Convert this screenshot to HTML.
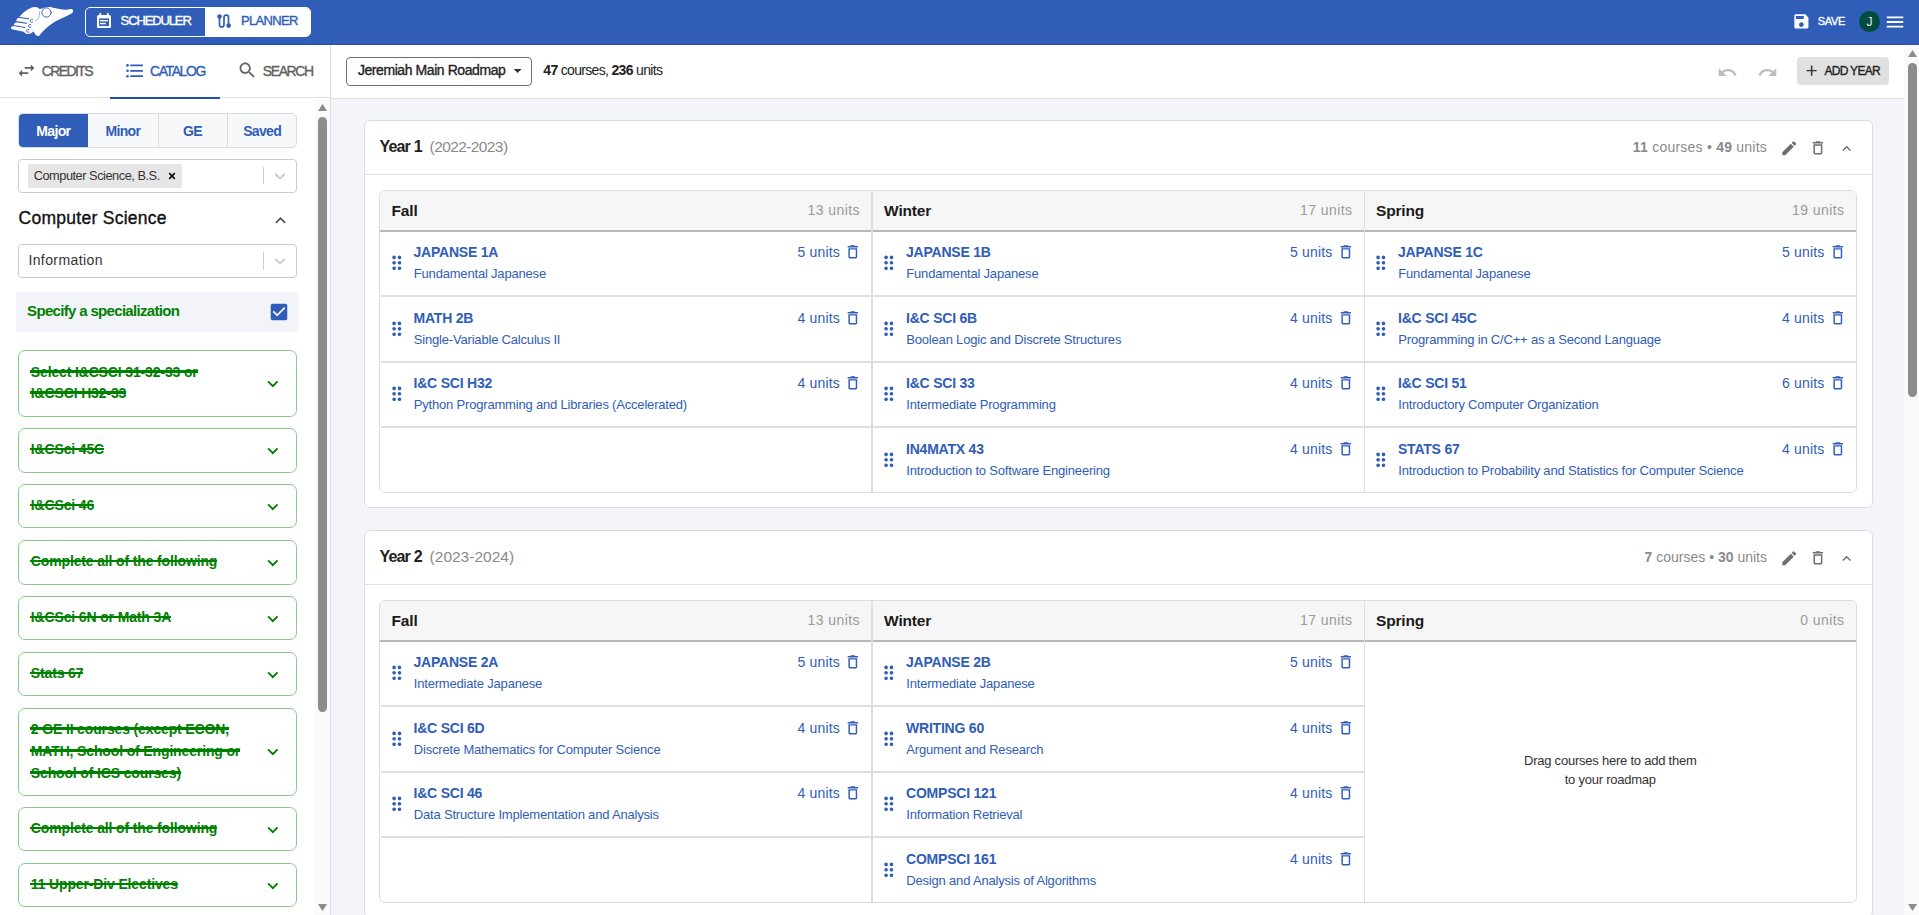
<!DOCTYPE html>
<html><head><meta charset="utf-8"><title>PeterPortal Roadmap</title>
<style>
*{box-sizing:border-box}
html,body{margin:0;padding:0}
body{width:1919px;height:915px;overflow:hidden;position:relative;font-family:"Liberation Sans", sans-serif;background:#fff}
.a{position:absolute}
.t{position:absolute;line-height:0;white-space:nowrap}
.st::after{content:"";position:absolute;left:-0.5px;right:0;top:-1.2px;height:2.2px;background:#008000}
</style></head><body>

<div class="a" style="left:0px;top:0px;width:1919px;height:45px;background:#305db7;border-bottom:1px solid #2550ad"></div>
<svg class="a" style="left:8px;top:4px;width:70px;height:36px" viewBox="0 0 1779 915">
<path fill="#fff" d="M320 295 C420 180 560 85 680 78 C740 76 775 100 800 130 L870 112 C950 80 1040 70 1120 88 C1300 128 1450 165 1580 130 C1645 115 1680 175 1640 220 C1590 270 1400 335 1200 445 C1010 560 890 680 795 810 C740 835 680 770 650 690 C615 735 545 770 480 760 C440 752 420 725 400 705 L100 640 C60 625 70 575 110 565 L150 555 C140 520 160 480 200 470 L210 455 C205 410 230 360 270 345 Z"/>
<g fill="none" stroke="#305db7" stroke-width="26" stroke-linecap="round">
<path d="M140 548 L432 598"/><path d="M200 448 L475 492"/><path d="M260 335 L525 372"/>
<circle cx="978" cy="215" r="118" stroke-width="24"/>
<path d="M625 395 A38 38 0 1 0 625 460" stroke-width="22"/><path d="M580 525 A38 38 0 1 0 580 590" stroke-width="22"/><path d="M530 650 A38 38 0 1 0 530 715" stroke-width="22"/>
<path d="M800 200 C805 300 780 390 700 425" stroke-width="14" stroke-dasharray="30 26"/>
</g></svg>
<div class="a" style="left:85px;top:7px;width:226px;height:29.5px;border:1.5px solid #fff;border-radius:5px;overflow:hidden"><div class="a" style="left:118.5px;top:0;width:110px;height:30px;background:#fff"></div></div>
<svg class="a" style="left:97px;top:12.7px;width:14px;height:15.2px" viewBox="0 0 14 15.2">
<rect x="0" y="2.1" width="14" height="13.1" rx="1.8" fill="#fff"/>
<rect x="2.4" y="0" width="1.8" height="3" rx=".6" fill="#fff"/><rect x="9.9" y="0" width="1.8" height="3" rx=".6" fill="#fff"/>
<rect x="2.1" y="5.4" width="9.9" height="7.7" fill="#305db7"/>
<rect x="3" y="7" width="7.9" height="1.4" fill="#fff"/><rect x="3" y="9.9" width="5.7" height="1.4" fill="#fff"/>
</svg>
<div id="t_sched" class="t" style="left:120.60px;top:21.45px;font-size:13px;color:#fff;font-weight:400;letter-spacing:-1.125px;-webkit-text-stroke:0.35px currentColor">SCHEDULER</div>
<svg class="a" style="left:217px;top:13.9px;width:14px;height:14px" viewBox="0 0 14 14">
<path d="M2.5 2.5 V10.7 A2.25 2.25 0 0 0 7 10.7 V3.3 A2.25 2.25 0 0 1 11.5 3.3 V11.5" fill="none" stroke="#305db7" stroke-width="1.7"/>
<circle cx="2.5" cy="2.5" r="2.3" fill="#305db7"/><circle cx="11.6" cy="11.6" r="2.3" fill="#305db7"/>
</svg>
<div id="t_plan" class="t" style="left:241.00px;top:21.45px;font-size:13px;color:#305db7;font-weight:400;letter-spacing:-0.667px;-webkit-text-stroke:0.35px currentColor">PLANNER</div>
<svg class="a" style="left:1792.10px;top:12.10px;width:18.80px;height:18.80px" viewBox="0 0 24 24"><path fill="#fff" d="M17 3H5c-1.11 0-2 .9-2 2v14c0 1.1.89 2 2 2h14c1.1 0 2-.9 2-2V7l-4-4zm-5 16c-1.66 0-3-1.34-3-3s1.34-3 3-3 3 1.34 3 3-1.34 3-3 3zm3-10H5V5h10v4z"/></svg>
<div id="t_save" class="t" style="left:1817.70px;top:21.15px;font-size:11px;color:#fff;font-weight:400;letter-spacing:-0.332px;-webkit-text-stroke:0.35px currentColor">SAVE</div>
<div class="a" style="left:1859px;top:11px;width:21px;height:21px;border-radius:50%;background:#004d40"></div>
<div id="t_j" class="t" style="left:1569.50px;width:600px;text-align:center;top:22.30px;font-size:12px;color:#e6e6e6;font-weight:400;letter-spacing:0px;">J</div>
<svg class="a" style="left:1883.75px;top:10.50px;width:22.00px;height:22.00px" viewBox="0 0 24 24"><path fill="#fff" d="M3 18h18v-2H3v2zm0-5h18v-2H3v2zm0-7v2h18V6H3z"/></svg>
<div class="a" style="left:330px;top:45px;width:1px;height:870px;background:#e0e0e0"></div>
<div class="a" style="left:0px;top:97px;width:330px;height:1px;background:#e0e0e0"></div>
<div class="a" style="left:110px;top:97px;width:110px;height:2px;background:#1d4fae"></div>
<svg class="a" style="left:16.30px;top:59.80px;width:21.00px;height:21.00px" viewBox="0 0 24 24"><path fill="#616161" d="M6.99 11L3 15l3.99 4v-3H14v-2H6.99v-3zM21 9l-3.99-4v3H10v2h7.01v3L21 9z"/></svg>
<div id="t_cred" class="t" style="left:41.70px;top:70.60px;font-size:14px;color:#616161;font-weight:400;letter-spacing:-1.585px;-webkit-text-stroke:0.35px currentColor">CREDITS</div>
<svg class="a" style="left:125.9px;top:64px;width:17.2px;height:13.6px" viewBox="0 0 17.2 13.6">
<g fill="#305db7"><circle cx="1.5" cy="1.4" r="1.3"/><circle cx="1.5" cy="6.8" r="1.3"/><circle cx="1.5" cy="12.2" r="1.3"/>
<rect x="4.2" y=".55" width="12.9" height="1.7" rx=".4"/><rect x="4.2" y="5.95" width="12.9" height="1.7" rx=".4"/><rect x="4.2" y="11.35" width="12.9" height="1.7" rx=".4"/></g></svg>
<div id="t_cat" class="t" style="left:150.00px;top:70.60px;font-size:14px;color:#305db7;font-weight:400;letter-spacing:-1.417px;-webkit-text-stroke:0.35px currentColor">CATALOG</div>
<svg class="a" style="left:237.40px;top:60.40px;width:20.60px;height:20.60px" viewBox="0 0 24 24"><path fill="#616161" d="M15.5 14h-.79l-.28-.27C15.41 12.59 16 11.11 16 9.5 16 5.91 13.09 3 9.5 3S3 5.91 3 9.5 5.91 16 9.5 16c1.61 0 3.09-.59 4.23-1.57l.27.28v.79l5 4.99L20.49 19l-4.99-5zm-6 0C7.01 14 5 11.99 5 9.5S7.01 5 9.5 5 14 7.01 14 9.5 11.99 14 9.5 14z"/></svg>
<div id="t_search" class="t" style="left:262.80px;top:70.60px;font-size:14px;color:#616161;font-weight:400;letter-spacing:-1.4px;-webkit-text-stroke:0.35px currentColor">SEARCH</div>
<div class="a" style="left:18px;top:113px;width:279px;height:34.5px;border:1px solid #d9dbe0;border-radius:5px;overflow:hidden;background:#f7f8fa"><div class="a" style="left:0;top:0;width:69px;height:33px;background:#305db7"></div><div class="a" style="left:138.5px;top:0;width:1px;height:33px;background:#d9dbe0"></div><div class="a" style="left:208px;top:0;width:1px;height:33px;background:#d9dbe0"></div></div>
<div id="t_seg0" class="t" style="left:-246.70px;width:600px;text-align:center;top:130.50px;font-size:14px;color:#fff;font-weight:700;letter-spacing:-0.625px;">Major</div>
<div id="t_seg1" class="t" style="left:-177.10px;width:600px;text-align:center;top:130.50px;font-size:14px;color:#305db7;font-weight:700;letter-spacing:-0.7px;">Minor</div>
<div id="t_seg2" class="t" style="left:-107.50px;width:600px;text-align:center;top:130.50px;font-size:14px;color:#305db7;font-weight:700;letter-spacing:-0.7px;">GE</div>
<div id="t_seg3" class="t" style="left:-37.90px;width:600px;text-align:center;top:130.50px;font-size:14px;color:#305db7;font-weight:700;letter-spacing:-0.7px;">Saved</div>
<div class="a" style="left:18px;top:159px;width:279px;height:33.5px;border:1px solid #cccccc;border-radius:4px;background:#fff"></div>
<div class="a" style="left:28px;top:164px;width:154px;height:23.7px;background:#e6e6e6;border-radius:2px"></div>
<div id="t_chip" class="t" style="left:33.70px;top:175.64px;font-size:12.75px;color:#333;font-weight:400;letter-spacing:-0.454px;">Computer Science, B.S.</div>
<svg class="a" style="left:168px;top:172.2px;width:8px;height:8px" viewBox="0 0 8 8"><path d="M1.2 1.2L6.8 6.8M6.8 1.2L1.2 6.8" stroke="#111" stroke-width="1.7"/></svg>
<div class="a" style="left:263.3px;top:167.3px;width:1px;height:17.2px;background:#cccccc"></div>
<svg class="a" style="left:270.8px;top:166.8px;width:18px;height:18px" viewBox="0 0 20 20"><path fill="#cccccc" d="M4.516 7.548c0.436-0.446 1.043-0.481 1.576 0l3.908 3.747 3.908-3.747c0.533-0.481 1.141-0.446 1.574 0 0.436 0.445 0.408 1.197 0 1.615-0.406 0.418-4.695 4.502-4.695 4.502-0.217 0.223-0.502 0.335-0.787 0.335s-0.57-0.112-0.789-0.335c0 0-4.287-4.084-4.695-4.502s-0.436-1.17 0-1.615z"/></svg>
<div id="t_cs" class="t" style="left:18.60px;top:218.07px;font-size:17.5px;color:#111;font-weight:400;letter-spacing:0.267px;-webkit-text-stroke:0.35px currentColor">Computer Science</div>
<svg class="a" style="left:269.70px;top:210.00px;width:21.00px;height:21.00px" viewBox="0 0 24 24"><path fill="#555" d="M12 8l-6 6 1.41 1.41L12 10.83l4.59 4.58L18 14z"/></svg>
<div class="a" style="left:18px;top:244.3px;width:279px;height:33.3px;border:1px solid #cccccc;border-radius:4px;background:#fff"></div>
<div id="t_info" class="t" style="left:28.40px;top:260.40px;font-size:14px;color:#333;font-weight:400;letter-spacing:0.4px;">Information</div>
<div class="a" style="left:263.3px;top:252px;width:1px;height:17.8px;background:#cccccc"></div>
<svg class="a" style="left:270.8px;top:251.5px;width:18px;height:18px" viewBox="0 0 20 20"><path fill="#cccccc" d="M4.516 7.548c0.436-0.446 1.043-0.481 1.576 0l3.908 3.747 3.908-3.747c0.533-0.481 1.141-0.446 1.574 0 0.436 0.445 0.408 1.197 0 1.615-0.406 0.418-4.695 4.502-4.695 4.502-0.217 0.223-0.502 0.335-0.787 0.335s-0.57-0.112-0.789-0.335c0 0-4.287-4.084-4.695-4.502s-0.436-1.17 0-1.615z"/></svg>
<div class="a" style="left:16.3px;top:292px;width:282.7px;height:40px;background:#f3f4f9;border-radius:4px"></div>
<div id="t_spec" class="t" style="left:27.10px;top:311.15px;font-size:15px;color:#008000;font-weight:700;letter-spacing:-0.674px;">Specify a specialization</div>
<svg class="a" style="left:267.75px;top:300.85px;width:22.00px;height:22.00px" viewBox="0 0 24 24"><path fill="#305db7" d="M19 3H5c-1.11 0-2 .9-2 2v14c0 1.1.89 2 2 2h14c1.11 0 2-.9 2-2V5c0-1.1-.89-2-2-2zm-9 14l-5-5 1.41-1.41L10 14.17l7.59-7.59L19 8l-9 9z"/></svg>
<div class="a" style="left:18px;top:350px;width:279px;height:66.7px;border:1px solid #88cc88;border-radius:7px;background:#fff"></div>
<div id="t_req0_0" class="t st" style="left:30.80px;top:371.55px;font-size:14px;color:#008000;font-weight:700;letter-spacing:-0.142px;">Select I&amp;CSCI 31-32-33 or</div>
<div id="t_req0_1" class="t st" style="left:30.80px;top:392.55px;font-size:14px;color:#008000;font-weight:700;letter-spacing:-0.142px;">I&amp;CSCI H32-33</div>
<svg class="a" style="left:262.10px;top:372.70px;width:21.60px;height:21.60px" viewBox="0 0 24 24"><path fill="#008000" d="M16.59 8.59L12 13.17 7.41 8.59 6 10l6 6 6-6z"/></svg>
<div class="a" style="left:18px;top:428px;width:279px;height:44.5px;border:1px solid #88cc88;border-radius:7px;background:#fff"></div>
<div id="t_req1_0" class="t st" style="left:30.80px;top:448.95px;font-size:14px;color:#008000;font-weight:700;letter-spacing:-0.142px;">I&amp;CSci 45C</div>
<svg class="a" style="left:262.10px;top:439.60px;width:21.60px;height:21.60px" viewBox="0 0 24 24"><path fill="#008000" d="M16.59 8.59L12 13.17 7.41 8.59 6 10l6 6 6-6z"/></svg>
<div class="a" style="left:18px;top:484.3px;width:279px;height:44.2px;border:1px solid #88cc88;border-radius:7px;background:#fff"></div>
<div id="t_req2_0" class="t st" style="left:30.80px;top:505.10px;font-size:14px;color:#008000;font-weight:700;letter-spacing:-0.142px;">I&amp;CSci 46</div>
<svg class="a" style="left:262.10px;top:495.75px;width:21.60px;height:21.60px" viewBox="0 0 24 24"><path fill="#008000" d="M16.59 8.59L12 13.17 7.41 8.59 6 10l6 6 6-6z"/></svg>
<div class="a" style="left:18px;top:540.4px;width:279px;height:44.2px;border:1px solid #88cc88;border-radius:7px;background:#fff"></div>
<div id="t_req3_0" class="t st" style="left:30.80px;top:561.20px;font-size:14px;color:#008000;font-weight:700;letter-spacing:-0.142px;">Complete all of the following</div>
<svg class="a" style="left:262.10px;top:551.85px;width:21.60px;height:21.60px" viewBox="0 0 24 24"><path fill="#008000" d="M16.59 8.59L12 13.17 7.41 8.59 6 10l6 6 6-6z"/></svg>
<div class="a" style="left:18px;top:596.1px;width:279px;height:44.2px;border:1px solid #88cc88;border-radius:7px;background:#fff"></div>
<div id="t_req4_0" class="t st" style="left:30.80px;top:616.90px;font-size:14px;color:#008000;font-weight:700;letter-spacing:-0.142px;">I&amp;CSci 6N or Math 3A</div>
<svg class="a" style="left:262.10px;top:607.55px;width:21.60px;height:21.60px" viewBox="0 0 24 24"><path fill="#008000" d="M16.59 8.59L12 13.17 7.41 8.59 6 10l6 6 6-6z"/></svg>
<div class="a" style="left:18px;top:652.2px;width:279px;height:43.9px;border:1px solid #88cc88;border-radius:7px;background:#fff"></div>
<div id="t_req5_0" class="t st" style="left:30.80px;top:672.85px;font-size:14px;color:#008000;font-weight:700;letter-spacing:-0.142px;">Stats 67</div>
<svg class="a" style="left:262.10px;top:663.50px;width:21.60px;height:21.60px" viewBox="0 0 24 24"><path fill="#008000" d="M16.59 8.59L12 13.17 7.41 8.59 6 10l6 6 6-6z"/></svg>
<div class="a" style="left:18px;top:708px;width:279px;height:87.7px;border:1px solid #88cc88;border-radius:7px;background:#fff"></div>
<div id="t_req6_0" class="t st" style="left:30.80px;top:728.55px;font-size:14px;color:#008000;font-weight:700;letter-spacing:-0.142px;">2 GE II courses (except ECON,</div>
<div id="t_req6_1" class="t st" style="left:30.80px;top:750.55px;font-size:14px;color:#008000;font-weight:700;letter-spacing:-0.142px;">MATH, School of Engineering or</div>
<div id="t_req6_2" class="t st" style="left:30.80px;top:772.55px;font-size:14px;color:#008000;font-weight:700;letter-spacing:-0.142px;">School of ICS courses)</div>
<svg class="a" style="left:262.10px;top:741.20px;width:21.60px;height:21.60px" viewBox="0 0 24 24"><path fill="#008000" d="M16.59 8.59L12 13.17 7.41 8.59 6 10l6 6 6-6z"/></svg>
<div class="a" style="left:18px;top:807.3px;width:279px;height:44.2px;border:1px solid #88cc88;border-radius:7px;background:#fff"></div>
<div id="t_req7_0" class="t st" style="left:30.80px;top:828.10px;font-size:14px;color:#008000;font-weight:700;letter-spacing:-0.142px;">Complete all of the following</div>
<svg class="a" style="left:262.10px;top:818.75px;width:21.60px;height:21.60px" viewBox="0 0 24 24"><path fill="#008000" d="M16.59 8.59L12 13.17 7.41 8.59 6 10l6 6 6-6z"/></svg>
<div class="a" style="left:18px;top:863.3px;width:279px;height:44.2px;border:1px solid #88cc88;border-radius:7px;background:#fff"></div>
<div id="t_req8_0" class="t st" style="left:30.80px;top:884.10px;font-size:14px;color:#008000;font-weight:700;letter-spacing:-0.142px;">11 Upper-Div Electives</div>
<svg class="a" style="left:262.10px;top:874.75px;width:21.60px;height:21.60px" viewBox="0 0 24 24"><path fill="#008000" d="M16.59 8.59L12 13.17 7.41 8.59 6 10l6 6 6-6z"/></svg>
<div class="a" style="left:315px;top:99px;width:15px;height:816px;background:#fafafa"></div>
<div class="a" style="left:318px;top:117.2px;width:9px;height:594.4px;border-radius:4.5px;background:#8c8c8c"></div>
<svg class="a" style="left:317px;top:103px;width:11px;height:9px" viewBox="0 0 11 9"><path d="M5.5 1L10 8H1z" fill="#8c8c8c"/></svg>
<svg class="a" style="left:317px;top:903px;width:11px;height:9px" viewBox="0 0 11 9"><path d="M1 1H10L5.5 8z" fill="#8c8c8c"/></svg>
<div class="a" style="left:331px;top:45px;width:1573px;height:53px;background:#fff"></div>
<div class="a" style="left:331px;top:98px;width:1573px;height:1px;background:#e0e0e0"></div>
<div class="a" style="left:331px;top:99px;width:1573px;height:816px;background:#f4f5fa"></div>
<div class="a" style="left:346.3px;top:57.4px;width:185.3px;height:28.6px;border:1px solid #6e6e6e;border-radius:4px"></div>
<div id="t_rm" class="t" style="left:357.90px;top:70.30px;font-size:14px;color:#222;font-weight:400;letter-spacing:-0.425px;-webkit-text-stroke:0.35px currentColor">Jeremiah Main Roadmap</div>
<svg class="a" style="left:508.40px;top:61.00px;width:19.20px;height:19.20px" viewBox="0 0 24 24"><path fill="#333" d="M7 10l5 5 5-5z"/></svg>
<div id="t_cnt" class="t" style="left:543.30px;top:70.30px;font-size:14px;color:#222;font-weight:400;letter-spacing:-0.675px;"><b>47</b> courses, <b>236</b> units</div>
<svg class="a" style="left:1716.75px;top:61.60px;width:21.00px;height:21.00px" viewBox="0 0 24 24"><path fill="#bdbdbd" d="M12.5 8c-2.65 0-5.05.99-6.9 2.6L2 7v9h9l-3.62-3.62c1.39-1.16 3.16-1.88 5.12-1.88 3.54 0 6.55 2.31 7.6 5.5l2.37-.78C21.08 11.03 17.15 8 12.5 8z"/></svg>
<svg class="a" style="left:1757.25px;top:61.60px;width:21.00px;height:21.00px" viewBox="0 0 24 24"><path fill="#bdbdbd" d="M18.4 10.6C16.55 8.99 14.15 8 11.5 8c-4.65 0-8.58 3.03-9.96 7.22L3.9 16c1.05-3.19 4.05-5.5 7.6-5.5 1.95 0 3.73.72 5.12 1.88L13 16h9V7l-3.6 3.6z"/></svg>
<div class="a" style="left:1797px;top:57px;width:92px;height:27.7px;background:#e0e0e0;border-radius:4px"></div>
<svg class="a" style="left:1803.20px;top:62.40px;width:17.30px;height:17.30px" viewBox="0 0 24 24"><path fill="#333" d="M19 13h-6v6h-2v-6H5v-2h6V5h2v6h6v2z"/></svg>
<div id="t_addyear" class="t" style="left:1824.50px;top:70.80px;font-size:12px;color:#222;font-weight:400;letter-spacing:-0.714px;-webkit-text-stroke:0.35px currentColor">ADD YEAR</div>
<div class="a" style="left:1904px;top:45px;width:15px;height:870px;background:#fafafa"></div>
<div class="a" style="left:1908px;top:62.7px;width:9px;height:334px;border-radius:4.5px;background:#8c8c8c"></div>
<svg class="a" style="left:1907px;top:49px;width:11px;height:9px" viewBox="0 0 11 9"><path d="M5.5 1L10 8H1z" fill="#8c8c8c"/></svg>
<svg class="a" style="left:1907px;top:903px;width:11px;height:9px" viewBox="0 0 11 9"><path d="M1 1H10L5.5 8z" fill="#8c8c8c"/></svg>
<div class="a" style="left:364px;top:120px;height:388px;border:1px solid #dddddd;border-radius:6px;background:#fff;width:1509px"></div>
<div class="a" style="left:365px;top:174px;width:1507px;height:1px;background:#e0e0e0"></div>
<div id="t_y0" class="t" style="left:379.40px;top:147.20px;font-size:16px;color:#212121;font-weight:700;letter-spacing:-0.8px;">Year 1</div>
<div id="t_yr0" class="t" style="left:429.60px;top:147.17px;font-size:15.5px;color:#8a8a8a;font-weight:400;letter-spacing:-0.6px;">(2022-2023)</div>
<div id="t_yc0" class="t" style="right:152.00px;top:147.20px;font-size:14px;color:#8a8a8a;font-weight:400;letter-spacing:0.225px;"><b>11</b> courses • <b>49</b> units</div>
<svg class="a" style="left:1779.60px;top:139.00px;width:18.50px;height:18.50px" viewBox="0 0 24 24"><path fill="#6e6e6e" d="M3 17.25V21h3.75L17.81 9.94l-3.75-3.75L3 17.25zM20.71 7.04c.39-.39.39-1.02 0-1.41l-2.34-2.34a.9959.9959 0 0 0-1.41 0l-1.83 1.83 3.75 3.75 1.83-1.83z"/></svg>
<svg class="a" style="left:1809.00px;top:139.10px;width:17.80px;height:17.80px" viewBox="0 0 24 24"><path fill="#6e6e6e" d="M6 19c0 1.1.9 2 2 2h8c1.1 0 2-.9 2-2V7H6v12zM8 9h8v10H8V9zm7.5-5l-1-1h-5l-1 1H5v2h14V4h-3.5z"/></svg>
<svg class="a" style="left:1837.70px;top:140.20px;width:17.30px;height:17.30px" viewBox="0 0 24 24"><path fill="#6e6e6e" d="M12 8l-6 6 1.41 1.41L12 10.83l4.59 4.58L18 14z"/></svg>
<div class="a" style="left:379px;top:190px;width:1478px;height:303px;border:1px solid #dcdcdc;border-radius:6px;overflow:hidden;background:#fff"><div class="a" style="left:0;top:0;width:1476px;height:41px;background:#f6f6f6;border-bottom:2px solid #b8b8b8"></div><div class="a" style="left:491px;top:0;width:2px;height:301px;background:#dedede"></div><div class="a" style="left:983.5px;top:0;width:1.6px;height:301px;background:#dedede"></div></div>
<div id="t_q00" class="t" style="left:391.60px;top:211.17px;font-size:15.5px;color:#1a1a1a;font-weight:700;letter-spacing:-0.201px;">Fall</div>
<div id="t_qu00" class="t" style="right:1059.00px;top:210.30px;font-size:14px;color:#9a9a9a;font-weight:400;letter-spacing:0.43px;">13 units</div>
<div class="a" style="left:380.5px;top:295.0px;width:490.5px;height:2px;background:#dedede"></div>
<svg class="a" style="left:385.50px;top:252.00px;width:21.60px;height:21.60px" viewBox="0 0 24 24"><path fill="#305db7" d="M11 18c0 1.1-.9 2-2 2s-2-.9-2-2 .9-2 2-2 2 .9 2 2zm-2-8c-1.1 0-2 .9-2 2s.9 2 2 2 2-.9 2-2-.9-2-2-2zm0-6c-1.1 0-2 .9-2 2s.9 2 2 2 2-.9 2-2-.9-2-2-2zm6 4c1.1 0 2-.9 2-2s-.9-2-2-2-2 .9-2 2 .9 2 2 2zm0 2c-1.1 0-2 .9-2 2s.9 2 2 2 2-.9 2-2-.9-2-2-2zm0 6c-1.1 0-2 .9-2 2s.9 2 2 2 2-.9 2-2-.9-2-2-2z"/></svg>
<div id="t_cn000" class="t" style="left:413.50px;top:252.20px;font-size:14px;color:#305db7;font-weight:700;letter-spacing:-0.217px;">JAPANSE 1A</div>
<div id="t_ct000" class="t" style="left:413.80px;top:274.25px;font-size:13px;color:#305db7;font-weight:400;letter-spacing:-0.187px;">Fundamental Japanese</div>
<div id="t_cu000" class="t" style="right:1079.00px;top:252.00px;font-size:14px;color:#305db7;font-weight:400;letter-spacing:0.167px;">5 units</div>
<svg class="a" style="left:844.20px;top:243.10px;width:17.60px;height:17.60px" viewBox="0 0 24 24"><path fill="#305db7" d="M6 19c0 1.1.9 2 2 2h8c1.1 0 2-.9 2-2V7H6v12zM8 9h8v10H8V9zm7.5-5l-1-1h-5l-1 1H5v2h14V4h-3.5z"/></svg>
<div class="a" style="left:380.5px;top:360.5px;width:490.5px;height:2px;background:#dedede"></div>
<svg class="a" style="left:385.50px;top:317.50px;width:21.60px;height:21.60px" viewBox="0 0 24 24"><path fill="#305db7" d="M11 18c0 1.1-.9 2-2 2s-2-.9-2-2 .9-2 2-2 2 .9 2 2zm-2-8c-1.1 0-2 .9-2 2s.9 2 2 2 2-.9 2-2-.9-2-2-2zm0-6c-1.1 0-2 .9-2 2s.9 2 2 2 2-.9 2-2-.9-2-2-2zm6 4c1.1 0 2-.9 2-2s-.9-2-2-2-2 .9-2 2 .9 2 2 2zm0 2c-1.1 0-2 .9-2 2s.9 2 2 2 2-.9 2-2-.9-2-2-2zm0 6c-1.1 0-2 .9-2 2s.9 2 2 2 2-.9 2-2-.9-2-2-2z"/></svg>
<div id="t_cn001" class="t" style="left:413.50px;top:317.70px;font-size:14px;color:#305db7;font-weight:700;letter-spacing:-0.217px;">MATH 2B</div>
<div id="t_ct001" class="t" style="left:413.80px;top:339.75px;font-size:13px;color:#305db7;font-weight:400;letter-spacing:-0.187px;">Single-Variable Calculus II</div>
<div id="t_cu001" class="t" style="right:1079.00px;top:317.50px;font-size:14px;color:#305db7;font-weight:400;letter-spacing:0.167px;">4 units</div>
<svg class="a" style="left:844.20px;top:308.60px;width:17.60px;height:17.60px" viewBox="0 0 24 24"><path fill="#305db7" d="M6 19c0 1.1.9 2 2 2h8c1.1 0 2-.9 2-2V7H6v12zM8 9h8v10H8V9zm7.5-5l-1-1h-5l-1 1H5v2h14V4h-3.5z"/></svg>
<div class="a" style="left:380.5px;top:426.0px;width:490.5px;height:2px;background:#dedede"></div>
<svg class="a" style="left:385.50px;top:383.00px;width:21.60px;height:21.60px" viewBox="0 0 24 24"><path fill="#305db7" d="M11 18c0 1.1-.9 2-2 2s-2-.9-2-2 .9-2 2-2 2 .9 2 2zm-2-8c-1.1 0-2 .9-2 2s.9 2 2 2 2-.9 2-2-.9-2-2-2zm0-6c-1.1 0-2 .9-2 2s.9 2 2 2 2-.9 2-2-.9-2-2-2zm6 4c1.1 0 2-.9 2-2s-.9-2-2-2-2 .9-2 2 .9 2 2 2zm0 2c-1.1 0-2 .9-2 2s.9 2 2 2 2-.9 2-2-.9-2-2-2zm0 6c-1.1 0-2 .9-2 2s.9 2 2 2 2-.9 2-2-.9-2-2-2z"/></svg>
<div id="t_cn002" class="t" style="left:413.50px;top:383.20px;font-size:14px;color:#305db7;font-weight:700;letter-spacing:-0.217px;">I&amp;C SCI H32</div>
<div id="t_ct002" class="t" style="left:413.80px;top:405.25px;font-size:13px;color:#305db7;font-weight:400;letter-spacing:-0.187px;">Python Programming and Libraries (Accelerated)</div>
<div id="t_cu002" class="t" style="right:1079.00px;top:383.00px;font-size:14px;color:#305db7;font-weight:400;letter-spacing:0.167px;">4 units</div>
<svg class="a" style="left:844.20px;top:374.10px;width:17.60px;height:17.60px" viewBox="0 0 24 24"><path fill="#305db7" d="M6 19c0 1.1.9 2 2 2h8c1.1 0 2-.9 2-2V7H6v12zM8 9h8v10H8V9zm7.5-5l-1-1h-5l-1 1H5v2h14V4h-3.5z"/></svg>
<div id="t_q01" class="t" style="left:884.10px;top:211.17px;font-size:15.5px;color:#1a1a1a;font-weight:700;letter-spacing:-0.201px;">Winter</div>
<div id="t_qu01" class="t" style="right:566.50px;top:210.30px;font-size:14px;color:#9a9a9a;font-weight:400;letter-spacing:0.43px;">17 units</div>
<div class="a" style="left:873px;top:295.0px;width:490.5px;height:2px;background:#dedede"></div>
<svg class="a" style="left:878.00px;top:252.00px;width:21.60px;height:21.60px" viewBox="0 0 24 24"><path fill="#305db7" d="M11 18c0 1.1-.9 2-2 2s-2-.9-2-2 .9-2 2-2 2 .9 2 2zm-2-8c-1.1 0-2 .9-2 2s.9 2 2 2 2-.9 2-2-.9-2-2-2zm0-6c-1.1 0-2 .9-2 2s.9 2 2 2 2-.9 2-2-.9-2-2-2zm6 4c1.1 0 2-.9 2-2s-.9-2-2-2-2 .9-2 2 .9 2 2 2zm0 2c-1.1 0-2 .9-2 2s.9 2 2 2 2-.9 2-2-.9-2-2-2zm0 6c-1.1 0-2 .9-2 2s.9 2 2 2 2-.9 2-2-.9-2-2-2z"/></svg>
<div id="t_cn010" class="t" style="left:906.00px;top:252.20px;font-size:14px;color:#305db7;font-weight:700;letter-spacing:-0.217px;">JAPANSE 1B</div>
<div id="t_ct010" class="t" style="left:906.30px;top:274.25px;font-size:13px;color:#305db7;font-weight:400;letter-spacing:-0.187px;">Fundamental Japanese</div>
<div id="t_cu010" class="t" style="right:586.50px;top:252.00px;font-size:14px;color:#305db7;font-weight:400;letter-spacing:0.167px;">5 units</div>
<svg class="a" style="left:1336.70px;top:243.10px;width:17.60px;height:17.60px" viewBox="0 0 24 24"><path fill="#305db7" d="M6 19c0 1.1.9 2 2 2h8c1.1 0 2-.9 2-2V7H6v12zM8 9h8v10H8V9zm7.5-5l-1-1h-5l-1 1H5v2h14V4h-3.5z"/></svg>
<div class="a" style="left:873px;top:360.5px;width:490.5px;height:2px;background:#dedede"></div>
<svg class="a" style="left:878.00px;top:317.50px;width:21.60px;height:21.60px" viewBox="0 0 24 24"><path fill="#305db7" d="M11 18c0 1.1-.9 2-2 2s-2-.9-2-2 .9-2 2-2 2 .9 2 2zm-2-8c-1.1 0-2 .9-2 2s.9 2 2 2 2-.9 2-2-.9-2-2-2zm0-6c-1.1 0-2 .9-2 2s.9 2 2 2 2-.9 2-2-.9-2-2-2zm6 4c1.1 0 2-.9 2-2s-.9-2-2-2-2 .9-2 2 .9 2 2 2zm0 2c-1.1 0-2 .9-2 2s.9 2 2 2 2-.9 2-2-.9-2-2-2zm0 6c-1.1 0-2 .9-2 2s.9 2 2 2 2-.9 2-2-.9-2-2-2z"/></svg>
<div id="t_cn011" class="t" style="left:906.00px;top:317.70px;font-size:14px;color:#305db7;font-weight:700;letter-spacing:-0.217px;">I&amp;C SCI 6B</div>
<div id="t_ct011" class="t" style="left:906.30px;top:339.75px;font-size:13px;color:#305db7;font-weight:400;letter-spacing:-0.187px;">Boolean Logic and Discrete Structures</div>
<div id="t_cu011" class="t" style="right:586.50px;top:317.50px;font-size:14px;color:#305db7;font-weight:400;letter-spacing:0.167px;">4 units</div>
<svg class="a" style="left:1336.70px;top:308.60px;width:17.60px;height:17.60px" viewBox="0 0 24 24"><path fill="#305db7" d="M6 19c0 1.1.9 2 2 2h8c1.1 0 2-.9 2-2V7H6v12zM8 9h8v10H8V9zm7.5-5l-1-1h-5l-1 1H5v2h14V4h-3.5z"/></svg>
<div class="a" style="left:873px;top:426.0px;width:490.5px;height:2px;background:#dedede"></div>
<svg class="a" style="left:878.00px;top:383.00px;width:21.60px;height:21.60px" viewBox="0 0 24 24"><path fill="#305db7" d="M11 18c0 1.1-.9 2-2 2s-2-.9-2-2 .9-2 2-2 2 .9 2 2zm-2-8c-1.1 0-2 .9-2 2s.9 2 2 2 2-.9 2-2-.9-2-2-2zm0-6c-1.1 0-2 .9-2 2s.9 2 2 2 2-.9 2-2-.9-2-2-2zm6 4c1.1 0 2-.9 2-2s-.9-2-2-2-2 .9-2 2 .9 2 2 2zm0 2c-1.1 0-2 .9-2 2s.9 2 2 2 2-.9 2-2-.9-2-2-2zm0 6c-1.1 0-2 .9-2 2s.9 2 2 2 2-.9 2-2-.9-2-2-2z"/></svg>
<div id="t_cn012" class="t" style="left:906.00px;top:383.20px;font-size:14px;color:#305db7;font-weight:700;letter-spacing:-0.217px;">I&amp;C SCI 33</div>
<div id="t_ct012" class="t" style="left:906.30px;top:405.25px;font-size:13px;color:#305db7;font-weight:400;letter-spacing:-0.187px;">Intermediate Programming</div>
<div id="t_cu012" class="t" style="right:586.50px;top:383.00px;font-size:14px;color:#305db7;font-weight:400;letter-spacing:0.167px;">4 units</div>
<svg class="a" style="left:1336.70px;top:374.10px;width:17.60px;height:17.60px" viewBox="0 0 24 24"><path fill="#305db7" d="M6 19c0 1.1.9 2 2 2h8c1.1 0 2-.9 2-2V7H6v12zM8 9h8v10H8V9zm7.5-5l-1-1h-5l-1 1H5v2h14V4h-3.5z"/></svg>
<svg class="a" style="left:878.00px;top:448.50px;width:21.60px;height:21.60px" viewBox="0 0 24 24"><path fill="#305db7" d="M11 18c0 1.1-.9 2-2 2s-2-.9-2-2 .9-2 2-2 2 .9 2 2zm-2-8c-1.1 0-2 .9-2 2s.9 2 2 2 2-.9 2-2-.9-2-2-2zm0-6c-1.1 0-2 .9-2 2s.9 2 2 2 2-.9 2-2-.9-2-2-2zm6 4c1.1 0 2-.9 2-2s-.9-2-2-2-2 .9-2 2 .9 2 2 2zm0 2c-1.1 0-2 .9-2 2s.9 2 2 2 2-.9 2-2-.9-2-2-2zm0 6c-1.1 0-2 .9-2 2s.9 2 2 2 2-.9 2-2-.9-2-2-2z"/></svg>
<div id="t_cn013" class="t" style="left:906.00px;top:448.70px;font-size:14px;color:#305db7;font-weight:700;letter-spacing:-0.217px;">IN4MATX 43</div>
<div id="t_ct013" class="t" style="left:906.30px;top:470.75px;font-size:13px;color:#305db7;font-weight:400;letter-spacing:-0.187px;">Introduction to Software Engineering</div>
<div id="t_cu013" class="t" style="right:586.50px;top:448.50px;font-size:14px;color:#305db7;font-weight:400;letter-spacing:0.167px;">4 units</div>
<svg class="a" style="left:1336.70px;top:439.60px;width:17.60px;height:17.60px" viewBox="0 0 24 24"><path fill="#305db7" d="M6 19c0 1.1.9 2 2 2h8c1.1 0 2-.9 2-2V7H6v12zM8 9h8v10H8V9zm7.5-5l-1-1h-5l-1 1H5v2h14V4h-3.5z"/></svg>
<div id="t_q02" class="t" style="left:1376.10px;top:211.17px;font-size:15.5px;color:#1a1a1a;font-weight:700;letter-spacing:-0.201px;">Spring</div>
<div id="t_qu02" class="t" style="right:74.50px;top:210.30px;font-size:14px;color:#9a9a9a;font-weight:400;letter-spacing:0.43px;">19 units</div>
<div class="a" style="left:1365px;top:295.0px;width:490.5px;height:2px;background:#dedede"></div>
<svg class="a" style="left:1370.00px;top:252.00px;width:21.60px;height:21.60px" viewBox="0 0 24 24"><path fill="#305db7" d="M11 18c0 1.1-.9 2-2 2s-2-.9-2-2 .9-2 2-2 2 .9 2 2zm-2-8c-1.1 0-2 .9-2 2s.9 2 2 2 2-.9 2-2-.9-2-2-2zm0-6c-1.1 0-2 .9-2 2s.9 2 2 2 2-.9 2-2-.9-2-2-2zm6 4c1.1 0 2-.9 2-2s-.9-2-2-2-2 .9-2 2 .9 2 2 2zm0 2c-1.1 0-2 .9-2 2s.9 2 2 2 2-.9 2-2-.9-2-2-2zm0 6c-1.1 0-2 .9-2 2s.9 2 2 2 2-.9 2-2-.9-2-2-2z"/></svg>
<div id="t_cn020" class="t" style="left:1398.00px;top:252.20px;font-size:14px;color:#305db7;font-weight:700;letter-spacing:-0.217px;">JAPANSE 1C</div>
<div id="t_ct020" class="t" style="left:1398.30px;top:274.25px;font-size:13px;color:#305db7;font-weight:400;letter-spacing:-0.187px;">Fundamental Japanese</div>
<div id="t_cu020" class="t" style="right:94.50px;top:252.00px;font-size:14px;color:#305db7;font-weight:400;letter-spacing:0.167px;">5 units</div>
<svg class="a" style="left:1828.70px;top:243.10px;width:17.60px;height:17.60px" viewBox="0 0 24 24"><path fill="#305db7" d="M6 19c0 1.1.9 2 2 2h8c1.1 0 2-.9 2-2V7H6v12zM8 9h8v10H8V9zm7.5-5l-1-1h-5l-1 1H5v2h14V4h-3.5z"/></svg>
<div class="a" style="left:1365px;top:360.5px;width:490.5px;height:2px;background:#dedede"></div>
<svg class="a" style="left:1370.00px;top:317.50px;width:21.60px;height:21.60px" viewBox="0 0 24 24"><path fill="#305db7" d="M11 18c0 1.1-.9 2-2 2s-2-.9-2-2 .9-2 2-2 2 .9 2 2zm-2-8c-1.1 0-2 .9-2 2s.9 2 2 2 2-.9 2-2-.9-2-2-2zm0-6c-1.1 0-2 .9-2 2s.9 2 2 2 2-.9 2-2-.9-2-2-2zm6 4c1.1 0 2-.9 2-2s-.9-2-2-2-2 .9-2 2 .9 2 2 2zm0 2c-1.1 0-2 .9-2 2s.9 2 2 2 2-.9 2-2-.9-2-2-2zm0 6c-1.1 0-2 .9-2 2s.9 2 2 2 2-.9 2-2-.9-2-2-2z"/></svg>
<div id="t_cn021" class="t" style="left:1398.00px;top:317.70px;font-size:14px;color:#305db7;font-weight:700;letter-spacing:-0.217px;">I&amp;C SCI 45C</div>
<div id="t_ct021" class="t" style="left:1398.30px;top:339.75px;font-size:13px;color:#305db7;font-weight:400;letter-spacing:-0.187px;">Programming in C/C++ as a Second Language</div>
<div id="t_cu021" class="t" style="right:94.50px;top:317.50px;font-size:14px;color:#305db7;font-weight:400;letter-spacing:0.167px;">4 units</div>
<svg class="a" style="left:1828.70px;top:308.60px;width:17.60px;height:17.60px" viewBox="0 0 24 24"><path fill="#305db7" d="M6 19c0 1.1.9 2 2 2h8c1.1 0 2-.9 2-2V7H6v12zM8 9h8v10H8V9zm7.5-5l-1-1h-5l-1 1H5v2h14V4h-3.5z"/></svg>
<div class="a" style="left:1365px;top:426.0px;width:490.5px;height:2px;background:#dedede"></div>
<svg class="a" style="left:1370.00px;top:383.00px;width:21.60px;height:21.60px" viewBox="0 0 24 24"><path fill="#305db7" d="M11 18c0 1.1-.9 2-2 2s-2-.9-2-2 .9-2 2-2 2 .9 2 2zm-2-8c-1.1 0-2 .9-2 2s.9 2 2 2 2-.9 2-2-.9-2-2-2zm0-6c-1.1 0-2 .9-2 2s.9 2 2 2 2-.9 2-2-.9-2-2-2zm6 4c1.1 0 2-.9 2-2s-.9-2-2-2-2 .9-2 2 .9 2 2 2zm0 2c-1.1 0-2 .9-2 2s.9 2 2 2 2-.9 2-2-.9-2-2-2zm0 6c-1.1 0-2 .9-2 2s.9 2 2 2 2-.9 2-2-.9-2-2-2z"/></svg>
<div id="t_cn022" class="t" style="left:1398.00px;top:383.20px;font-size:14px;color:#305db7;font-weight:700;letter-spacing:-0.217px;">I&amp;C SCI 51</div>
<div id="t_ct022" class="t" style="left:1398.30px;top:405.25px;font-size:13px;color:#305db7;font-weight:400;letter-spacing:-0.187px;">Introductory Computer Organization</div>
<div id="t_cu022" class="t" style="right:94.50px;top:383.00px;font-size:14px;color:#305db7;font-weight:400;letter-spacing:0.167px;">6 units</div>
<svg class="a" style="left:1828.70px;top:374.10px;width:17.60px;height:17.60px" viewBox="0 0 24 24"><path fill="#305db7" d="M6 19c0 1.1.9 2 2 2h8c1.1 0 2-.9 2-2V7H6v12zM8 9h8v10H8V9zm7.5-5l-1-1h-5l-1 1H5v2h14V4h-3.5z"/></svg>
<svg class="a" style="left:1370.00px;top:448.50px;width:21.60px;height:21.60px" viewBox="0 0 24 24"><path fill="#305db7" d="M11 18c0 1.1-.9 2-2 2s-2-.9-2-2 .9-2 2-2 2 .9 2 2zm-2-8c-1.1 0-2 .9-2 2s.9 2 2 2 2-.9 2-2-.9-2-2-2zm0-6c-1.1 0-2 .9-2 2s.9 2 2 2 2-.9 2-2-.9-2-2-2zm6 4c1.1 0 2-.9 2-2s-.9-2-2-2-2 .9-2 2 .9 2 2 2zm0 2c-1.1 0-2 .9-2 2s.9 2 2 2 2-.9 2-2-.9-2-2-2zm0 6c-1.1 0-2 .9-2 2s.9 2 2 2 2-.9 2-2-.9-2-2-2z"/></svg>
<div id="t_cn023" class="t" style="left:1398.00px;top:448.70px;font-size:14px;color:#305db7;font-weight:700;letter-spacing:-0.217px;">STATS 67</div>
<div id="t_ct023" class="t" style="left:1398.30px;top:470.75px;font-size:13px;color:#305db7;font-weight:400;letter-spacing:-0.187px;">Introduction to Probability and Statistics for Computer Science</div>
<div id="t_cu023" class="t" style="right:94.50px;top:448.50px;font-size:14px;color:#305db7;font-weight:400;letter-spacing:0.167px;">4 units</div>
<svg class="a" style="left:1828.70px;top:439.60px;width:17.60px;height:17.60px" viewBox="0 0 24 24"><path fill="#305db7" d="M6 19c0 1.1.9 2 2 2h8c1.1 0 2-.9 2-2V7H6v12zM8 9h8v10H8V9zm7.5-5l-1-1h-5l-1 1H5v2h14V4h-3.5z"/></svg>
<div class="a" style="left:364px;top:530px;height:388px;border:1px solid #dddddd;border-radius:6px;background:#fff;width:1509px"></div>
<div class="a" style="left:365px;top:584px;width:1507px;height:1px;background:#e0e0e0"></div>
<div id="t_y1" class="t" style="left:379.40px;top:557.20px;font-size:16px;color:#212121;font-weight:700;letter-spacing:-0.8px;">Year 2</div>
<div id="t_yr1" class="t" style="left:429.60px;top:557.18px;font-size:15.5px;color:#8a8a8a;font-weight:400;letter-spacing:0px;">(2023-2024)</div>
<div id="t_yc1" class="t" style="right:152.00px;top:557.20px;font-size:14px;color:#8a8a8a;font-weight:400;letter-spacing:0px;"><b>7</b> courses • <b>30</b> units</div>
<svg class="a" style="left:1779.60px;top:549.00px;width:18.50px;height:18.50px" viewBox="0 0 24 24"><path fill="#6e6e6e" d="M3 17.25V21h3.75L17.81 9.94l-3.75-3.75L3 17.25zM20.71 7.04c.39-.39.39-1.02 0-1.41l-2.34-2.34a.9959.9959 0 0 0-1.41 0l-1.83 1.83 3.75 3.75 1.83-1.83z"/></svg>
<svg class="a" style="left:1809.00px;top:549.10px;width:17.80px;height:17.80px" viewBox="0 0 24 24"><path fill="#6e6e6e" d="M6 19c0 1.1.9 2 2 2h8c1.1 0 2-.9 2-2V7H6v12zM8 9h8v10H8V9zm7.5-5l-1-1h-5l-1 1H5v2h14V4h-3.5z"/></svg>
<svg class="a" style="left:1837.70px;top:550.20px;width:17.30px;height:17.30px" viewBox="0 0 24 24"><path fill="#6e6e6e" d="M12 8l-6 6 1.41 1.41L12 10.83l4.59 4.58L18 14z"/></svg>
<div class="a" style="left:379px;top:600px;width:1478px;height:303px;border:1px solid #dcdcdc;border-radius:6px;overflow:hidden;background:#fff"><div class="a" style="left:0;top:0;width:1476px;height:41px;background:#f6f6f6;border-bottom:2px solid #b8b8b8"></div><div class="a" style="left:491px;top:0;width:2px;height:301px;background:#dedede"></div><div class="a" style="left:983.5px;top:0;width:1.6px;height:301px;background:#dedede"></div></div>
<div id="t_q10" class="t" style="left:391.60px;top:621.18px;font-size:15.5px;color:#1a1a1a;font-weight:700;letter-spacing:-0.201px;">Fall</div>
<div id="t_qu10" class="t" style="right:1059.00px;top:620.30px;font-size:14px;color:#9a9a9a;font-weight:400;letter-spacing:0.43px;">13 units</div>
<div class="a" style="left:380.5px;top:705.0px;width:490.5px;height:2px;background:#dedede"></div>
<svg class="a" style="left:385.50px;top:662.00px;width:21.60px;height:21.60px" viewBox="0 0 24 24"><path fill="#305db7" d="M11 18c0 1.1-.9 2-2 2s-2-.9-2-2 .9-2 2-2 2 .9 2 2zm-2-8c-1.1 0-2 .9-2 2s.9 2 2 2 2-.9 2-2-.9-2-2-2zm0-6c-1.1 0-2 .9-2 2s.9 2 2 2 2-.9 2-2-.9-2-2-2zm6 4c1.1 0 2-.9 2-2s-.9-2-2-2-2 .9-2 2 .9 2 2 2zm0 2c-1.1 0-2 .9-2 2s.9 2 2 2 2-.9 2-2-.9-2-2-2zm0 6c-1.1 0-2 .9-2 2s.9 2 2 2 2-.9 2-2-.9-2-2-2z"/></svg>
<div id="t_cn100" class="t" style="left:413.50px;top:662.20px;font-size:14px;color:#305db7;font-weight:700;letter-spacing:-0.217px;">JAPANSE 2A</div>
<div id="t_ct100" class="t" style="left:413.80px;top:684.25px;font-size:13px;color:#305db7;font-weight:400;letter-spacing:-0.187px;">Intermediate Japanese</div>
<div id="t_cu100" class="t" style="right:1079.00px;top:662.00px;font-size:14px;color:#305db7;font-weight:400;letter-spacing:0.167px;">5 units</div>
<svg class="a" style="left:844.20px;top:653.10px;width:17.60px;height:17.60px" viewBox="0 0 24 24"><path fill="#305db7" d="M6 19c0 1.1.9 2 2 2h8c1.1 0 2-.9 2-2V7H6v12zM8 9h8v10H8V9zm7.5-5l-1-1h-5l-1 1H5v2h14V4h-3.5z"/></svg>
<div class="a" style="left:380.5px;top:770.5px;width:490.5px;height:2px;background:#dedede"></div>
<svg class="a" style="left:385.50px;top:727.50px;width:21.60px;height:21.60px" viewBox="0 0 24 24"><path fill="#305db7" d="M11 18c0 1.1-.9 2-2 2s-2-.9-2-2 .9-2 2-2 2 .9 2 2zm-2-8c-1.1 0-2 .9-2 2s.9 2 2 2 2-.9 2-2-.9-2-2-2zm0-6c-1.1 0-2 .9-2 2s.9 2 2 2 2-.9 2-2-.9-2-2-2zm6 4c1.1 0 2-.9 2-2s-.9-2-2-2-2 .9-2 2 .9 2 2 2zm0 2c-1.1 0-2 .9-2 2s.9 2 2 2 2-.9 2-2-.9-2-2-2zm0 6c-1.1 0-2 .9-2 2s.9 2 2 2 2-.9 2-2-.9-2-2-2z"/></svg>
<div id="t_cn101" class="t" style="left:413.50px;top:727.70px;font-size:14px;color:#305db7;font-weight:700;letter-spacing:-0.217px;">I&amp;C SCI 6D</div>
<div id="t_ct101" class="t" style="left:413.80px;top:749.75px;font-size:13px;color:#305db7;font-weight:400;letter-spacing:-0.187px;">Discrete Mathematics for Computer Science</div>
<div id="t_cu101" class="t" style="right:1079.00px;top:727.50px;font-size:14px;color:#305db7;font-weight:400;letter-spacing:0.167px;">4 units</div>
<svg class="a" style="left:844.20px;top:718.60px;width:17.60px;height:17.60px" viewBox="0 0 24 24"><path fill="#305db7" d="M6 19c0 1.1.9 2 2 2h8c1.1 0 2-.9 2-2V7H6v12zM8 9h8v10H8V9zm7.5-5l-1-1h-5l-1 1H5v2h14V4h-3.5z"/></svg>
<div class="a" style="left:380.5px;top:836.0px;width:490.5px;height:2px;background:#dedede"></div>
<svg class="a" style="left:385.50px;top:793.00px;width:21.60px;height:21.60px" viewBox="0 0 24 24"><path fill="#305db7" d="M11 18c0 1.1-.9 2-2 2s-2-.9-2-2 .9-2 2-2 2 .9 2 2zm-2-8c-1.1 0-2 .9-2 2s.9 2 2 2 2-.9 2-2-.9-2-2-2zm0-6c-1.1 0-2 .9-2 2s.9 2 2 2 2-.9 2-2-.9-2-2-2zm6 4c1.1 0 2-.9 2-2s-.9-2-2-2-2 .9-2 2 .9 2 2 2zm0 2c-1.1 0-2 .9-2 2s.9 2 2 2 2-.9 2-2-.9-2-2-2zm0 6c-1.1 0-2 .9-2 2s.9 2 2 2 2-.9 2-2-.9-2-2-2z"/></svg>
<div id="t_cn102" class="t" style="left:413.50px;top:793.20px;font-size:14px;color:#305db7;font-weight:700;letter-spacing:-0.217px;">I&amp;C SCI 46</div>
<div id="t_ct102" class="t" style="left:413.80px;top:815.25px;font-size:13px;color:#305db7;font-weight:400;letter-spacing:-0.187px;">Data Structure Implementation and Analysis</div>
<div id="t_cu102" class="t" style="right:1079.00px;top:793.00px;font-size:14px;color:#305db7;font-weight:400;letter-spacing:0.167px;">4 units</div>
<svg class="a" style="left:844.20px;top:784.10px;width:17.60px;height:17.60px" viewBox="0 0 24 24"><path fill="#305db7" d="M6 19c0 1.1.9 2 2 2h8c1.1 0 2-.9 2-2V7H6v12zM8 9h8v10H8V9zm7.5-5l-1-1h-5l-1 1H5v2h14V4h-3.5z"/></svg>
<div id="t_q11" class="t" style="left:884.10px;top:621.18px;font-size:15.5px;color:#1a1a1a;font-weight:700;letter-spacing:-0.201px;">Winter</div>
<div id="t_qu11" class="t" style="right:566.50px;top:620.30px;font-size:14px;color:#9a9a9a;font-weight:400;letter-spacing:0.43px;">17 units</div>
<div class="a" style="left:873px;top:705.0px;width:490.5px;height:2px;background:#dedede"></div>
<svg class="a" style="left:878.00px;top:662.00px;width:21.60px;height:21.60px" viewBox="0 0 24 24"><path fill="#305db7" d="M11 18c0 1.1-.9 2-2 2s-2-.9-2-2 .9-2 2-2 2 .9 2 2zm-2-8c-1.1 0-2 .9-2 2s.9 2 2 2 2-.9 2-2-.9-2-2-2zm0-6c-1.1 0-2 .9-2 2s.9 2 2 2 2-.9 2-2-.9-2-2-2zm6 4c1.1 0 2-.9 2-2s-.9-2-2-2-2 .9-2 2 .9 2 2 2zm0 2c-1.1 0-2 .9-2 2s.9 2 2 2 2-.9 2-2-.9-2-2-2zm0 6c-1.1 0-2 .9-2 2s.9 2 2 2 2-.9 2-2-.9-2-2-2z"/></svg>
<div id="t_cn110" class="t" style="left:906.00px;top:662.20px;font-size:14px;color:#305db7;font-weight:700;letter-spacing:-0.217px;">JAPANSE 2B</div>
<div id="t_ct110" class="t" style="left:906.30px;top:684.25px;font-size:13px;color:#305db7;font-weight:400;letter-spacing:-0.187px;">Intermediate Japanese</div>
<div id="t_cu110" class="t" style="right:586.50px;top:662.00px;font-size:14px;color:#305db7;font-weight:400;letter-spacing:0.167px;">5 units</div>
<svg class="a" style="left:1336.70px;top:653.10px;width:17.60px;height:17.60px" viewBox="0 0 24 24"><path fill="#305db7" d="M6 19c0 1.1.9 2 2 2h8c1.1 0 2-.9 2-2V7H6v12zM8 9h8v10H8V9zm7.5-5l-1-1h-5l-1 1H5v2h14V4h-3.5z"/></svg>
<div class="a" style="left:873px;top:770.5px;width:490.5px;height:2px;background:#dedede"></div>
<svg class="a" style="left:878.00px;top:727.50px;width:21.60px;height:21.60px" viewBox="0 0 24 24"><path fill="#305db7" d="M11 18c0 1.1-.9 2-2 2s-2-.9-2-2 .9-2 2-2 2 .9 2 2zm-2-8c-1.1 0-2 .9-2 2s.9 2 2 2 2-.9 2-2-.9-2-2-2zm0-6c-1.1 0-2 .9-2 2s.9 2 2 2 2-.9 2-2-.9-2-2-2zm6 4c1.1 0 2-.9 2-2s-.9-2-2-2-2 .9-2 2 .9 2 2 2zm0 2c-1.1 0-2 .9-2 2s.9 2 2 2 2-.9 2-2-.9-2-2-2zm0 6c-1.1 0-2 .9-2 2s.9 2 2 2 2-.9 2-2-.9-2-2-2z"/></svg>
<div id="t_cn111" class="t" style="left:906.00px;top:727.70px;font-size:14px;color:#305db7;font-weight:700;letter-spacing:-0.217px;">WRITING 60</div>
<div id="t_ct111" class="t" style="left:906.30px;top:749.75px;font-size:13px;color:#305db7;font-weight:400;letter-spacing:-0.187px;">Argument and Research</div>
<div id="t_cu111" class="t" style="right:586.50px;top:727.50px;font-size:14px;color:#305db7;font-weight:400;letter-spacing:0.167px;">4 units</div>
<svg class="a" style="left:1336.70px;top:718.60px;width:17.60px;height:17.60px" viewBox="0 0 24 24"><path fill="#305db7" d="M6 19c0 1.1.9 2 2 2h8c1.1 0 2-.9 2-2V7H6v12zM8 9h8v10H8V9zm7.5-5l-1-1h-5l-1 1H5v2h14V4h-3.5z"/></svg>
<div class="a" style="left:873px;top:836.0px;width:490.5px;height:2px;background:#dedede"></div>
<svg class="a" style="left:878.00px;top:793.00px;width:21.60px;height:21.60px" viewBox="0 0 24 24"><path fill="#305db7" d="M11 18c0 1.1-.9 2-2 2s-2-.9-2-2 .9-2 2-2 2 .9 2 2zm-2-8c-1.1 0-2 .9-2 2s.9 2 2 2 2-.9 2-2-.9-2-2-2zm0-6c-1.1 0-2 .9-2 2s.9 2 2 2 2-.9 2-2-.9-2-2-2zm6 4c1.1 0 2-.9 2-2s-.9-2-2-2-2 .9-2 2 .9 2 2 2zm0 2c-1.1 0-2 .9-2 2s.9 2 2 2 2-.9 2-2-.9-2-2-2zm0 6c-1.1 0-2 .9-2 2s.9 2 2 2 2-.9 2-2-.9-2-2-2z"/></svg>
<div id="t_cn112" class="t" style="left:906.00px;top:793.20px;font-size:14px;color:#305db7;font-weight:700;letter-spacing:-0.217px;">COMPSCI 121</div>
<div id="t_ct112" class="t" style="left:906.30px;top:815.25px;font-size:13px;color:#305db7;font-weight:400;letter-spacing:-0.187px;">Information Retrieval</div>
<div id="t_cu112" class="t" style="right:586.50px;top:793.00px;font-size:14px;color:#305db7;font-weight:400;letter-spacing:0.167px;">4 units</div>
<svg class="a" style="left:1336.70px;top:784.10px;width:17.60px;height:17.60px" viewBox="0 0 24 24"><path fill="#305db7" d="M6 19c0 1.1.9 2 2 2h8c1.1 0 2-.9 2-2V7H6v12zM8 9h8v10H8V9zm7.5-5l-1-1h-5l-1 1H5v2h14V4h-3.5z"/></svg>
<svg class="a" style="left:878.00px;top:858.50px;width:21.60px;height:21.60px" viewBox="0 0 24 24"><path fill="#305db7" d="M11 18c0 1.1-.9 2-2 2s-2-.9-2-2 .9-2 2-2 2 .9 2 2zm-2-8c-1.1 0-2 .9-2 2s.9 2 2 2 2-.9 2-2-.9-2-2-2zm0-6c-1.1 0-2 .9-2 2s.9 2 2 2 2-.9 2-2-.9-2-2-2zm6 4c1.1 0 2-.9 2-2s-.9-2-2-2-2 .9-2 2 .9 2 2 2zm0 2c-1.1 0-2 .9-2 2s.9 2 2 2 2-.9 2-2-.9-2-2-2zm0 6c-1.1 0-2 .9-2 2s.9 2 2 2 2-.9 2-2-.9-2-2-2z"/></svg>
<div id="t_cn113" class="t" style="left:906.00px;top:858.70px;font-size:14px;color:#305db7;font-weight:700;letter-spacing:-0.217px;">COMPSCI 161</div>
<div id="t_ct113" class="t" style="left:906.30px;top:880.75px;font-size:13px;color:#305db7;font-weight:400;letter-spacing:-0.187px;">Design and Analysis of Algorithms</div>
<div id="t_cu113" class="t" style="right:586.50px;top:858.50px;font-size:14px;color:#305db7;font-weight:400;letter-spacing:0.167px;">4 units</div>
<svg class="a" style="left:1336.70px;top:849.60px;width:17.60px;height:17.60px" viewBox="0 0 24 24"><path fill="#305db7" d="M6 19c0 1.1.9 2 2 2h8c1.1 0 2-.9 2-2V7H6v12zM8 9h8v10H8V9zm7.5-5l-1-1h-5l-1 1H5v2h14V4h-3.5z"/></svg>
<div id="t_q12" class="t" style="left:1376.10px;top:621.18px;font-size:15.5px;color:#1a1a1a;font-weight:700;letter-spacing:-0.201px;">Spring</div>
<div id="t_qu12" class="t" style="right:74.50px;top:620.30px;font-size:14px;color:#9a9a9a;font-weight:400;letter-spacing:0.43px;">0 units</div>
<div id="t_drag1" class="t" style="left:1310.25px;width:600px;text-align:center;top:760.95px;font-size:13px;color:#333;font-weight:400;letter-spacing:-0.231px;">Drag courses here to add them</div>
<div id="t_drag2" class="t" style="left:1310.25px;width:600px;text-align:center;top:780.15px;font-size:13px;color:#333;font-weight:400;letter-spacing:-0.242px;">to your roadmap</div>
</body></html>
